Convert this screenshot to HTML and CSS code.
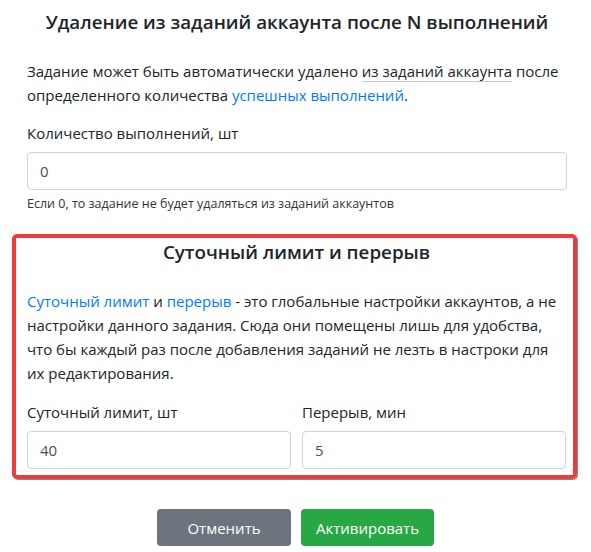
FILE: index.html
```html
<!DOCTYPE html>
<html lang="ru">
<head>
<meta charset="utf-8">
<link rel="stylesheet" href="styles.css">
</head>
<body>
<div class="page">
  <h5 class="title">Удаление из заданий аккаунта после N выполнений</h5>
  <p class="text">Задание может быть автоматически удалено <span class="dotted">из заданий аккаунта</span> после определенного количества <a class="link" href="#">успешных выполнений</a>.</p>
  <div class="field">
    <label class="label">Количество выполнений, шт</label>
    <div class="input">0</div>
    <small class="help">Если 0, то задание не будет удаляться из заданий аккаунтов</small>
  </div>
  <section class="highlight">
    <h5 class="title title-box">Суточный лимит и перерыв</h5>
    <p class="text text-box"><a class="link" href="#">Суточный лимит</a> и <a class="link" href="#">перерыв</a> - это глобальные настройки аккаунтов, а не настройки данного задания. Сюда они помещены лишь для удобства, что бы каждый раз после добавления заданий не лезть в настроки для их редактирования.</p>
    <div class="row">
      <div class="col">
        <label class="label">Суточный лимит, шт</label>
        <div class="input">40</div>
      </div>
      <div class="col">
        <label class="label">Перерыв, мин</label>
        <div class="input">5</div>
      </div>
    </div>
  </section>
  <div class="actions">
    <button class="btn btn-gray">Отменить</button>
    <button class="btn btn-green">Активировать</button>
  </div>
</div>
</body>
</html>
```

FILE: styles.css
```css
* { box-sizing: border-box; }
html, body { margin: 0; padding: 0; background: #fff; }
body {
  font-family: "Open Sans", "Noto Sans", sans-serif;
  font-size: 15px;
  color: #212529;
}
.page {
  padding: 8px 24px 0 27px;
}
.title {
  margin: 0;
  text-align: center;
  font-size: 18.8px;
  font-weight: 600;
  line-height: 28px;
}
.text {
  margin: 23px 0 0;
  line-height: 24px;
}
.dotted {
  border-bottom: 1px solid #c8c8c8;
}
.link { color: #007bff; text-decoration: none; }
.field { margin-top: 14px; }
.label { display: block; line-height: 24px; margin-bottom: 7px; }
.input {
  height: 38px;
  border: 1px solid #ced4da;
  border-radius: 4px;
  padding: 0 12px;
  line-height: 36px;
  color: #495057;
}
.help {
  display: block;
  font-size: 12.5px;
  line-height: 20px;
  margin-top: 4px;
  color: #333;
}
.highlight {
  margin: 20px -10px 0 -15px;
  border: 4px solid #ef3b3b;
  border-radius: 5px;
  box-shadow: 1px 1px 0 #8a8a8a;
  padding: 0 7px 6px 11px;
}
.text-box { margin-top: 23px; }
.row {
  display: flex;
  gap: 11px;
  margin-top: 15px;
}
.col { flex: 1; }
.actions {
  display: flex;
  justify-content: center;
  gap: 10px;
  margin: 30px 0 0 -3px;
}
.btn {
  font: inherit;
  font-size: 15px;
  height: 37px;
  border: 0;
  border-radius: 4px;
  color: #fff;
  padding: 0;
}
.btn-gray { background: #6c757d; width: 134px; }
.btn-green { background: #28a745; width: 133px; }
```
